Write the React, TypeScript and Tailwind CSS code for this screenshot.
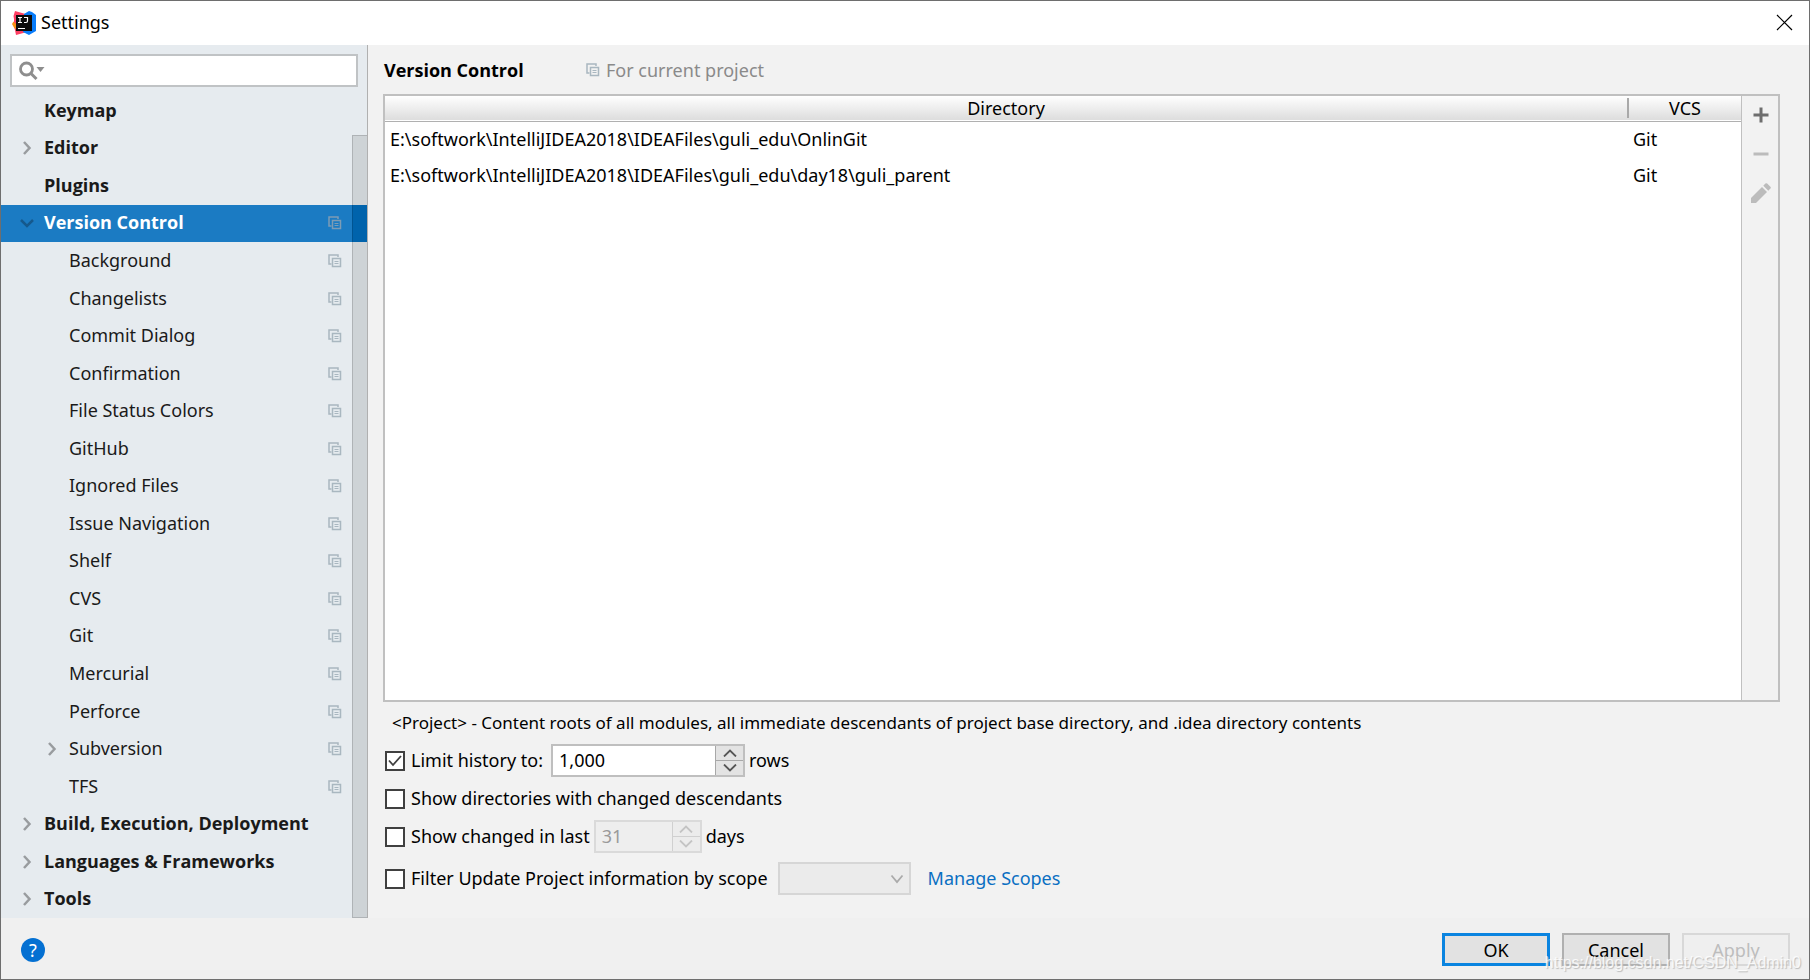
import { useState } from "react"

type Row = {
    label: string
    level: number
    arrow?: "right" | "down"
    project?: boolean
}

const rows: Row[] = [
    { label: "Keymap", level: 0 },
    { label: "Editor", level: 0, arrow: "right" },
    { label: "Plugins", level: 0 },
    { label: "Version Control", level: 0, arrow: "down", project: true },
    { label: "Background", level: 1, project: true },
    { label: "Changelists", level: 1, project: true },
    { label: "Commit Dialog", level: 1, project: true },
    { label: "Confirmation", level: 1, project: true },
    { label: "File Status Colors", level: 1, project: true },
    { label: "GitHub", level: 1, project: true },
    { label: "Ignored Files", level: 1, project: true },
    { label: "Issue Navigation", level: 1, project: true },
    { label: "Shelf", level: 1, project: true },
    { label: "CVS", level: 1, project: true },
    { label: "Git", level: 1, project: true },
    { label: "Mercurial", level: 1, project: true },
    { label: "Perforce", level: 1, project: true },
    { label: "Subversion", level: 1, arrow: "right", project: true },
    { label: "TFS", level: 1, project: true },
    { label: "Build, Execution, Deployment", level: 0, arrow: "right" },
    { label: "Languages & Frameworks", level: 0, arrow: "right" },
    { label: "Tools", level: 0, arrow: "right" },
]

const directories = [
    { path: "E:\\softwork\\IntelliJIDEA2018\\IDEAFiles\\guli_edu\\OnlinGit", vcs: "Git" },
    { path: "E:\\softwork\\IntelliJIDEA2018\\IDEAFiles\\guli_edu\\day18\\guli_parent", vcs: "Git" },
]

function Logo() {
    return (
        <svg width="24" height="24" viewBox="0 0 24 24" aria-hidden="true">
            <path d="M3 0 10 2l7 2-2 17-11 3-1-5-1-3 0-8-.5-3z" fill="#fe3f63" />
            <path d="M0 13 1.500 10.500l3 3v5L2 16.500z" fill="#f99012" />
            <path d="M12 3 17 0l3 1 4 3v16l-7 4-6-3z" fill="#087cfa" />
            <rect x="4" y="4" width="16" height="16" fill="#0c0c0c" />
            <path d="M6 6.500h4M8 6.500v5M6 11.500h4M12 6.500h3.500v3.500q0 1.500-1.500 1.500h-2M6 17.500h7" stroke="#fff" strokeWidth="1.200" fill="none" />
        </svg>
    )
}

function ProjectIcon({ selected = false }: { selected?: boolean }) {
    return (
        <svg width="14" height="14" viewBox="0 0 14 14" fill="none" stroke={selected ? "#7d9cb5" : "#a9b7c0"} className="shrink-0" aria-hidden="true">
            <path d="M3.500 10H1V1h9v2" strokeWidth="1.500" />
            <path d="M4.500 4.500h8v8h-8z" strokeWidth="1.500" />
            <path d="M6.500 7.500h4M6.500 9.500h4" />
        </svg>
    )
}

function Arrow({ dir }: { dir: "right" | "down" }) {
    return (
        <svg width="14" height="16" viewBox="0 0 14 16" fill="none" strokeWidth="2.500" aria-hidden="true">
            {dir === "right" ?
                <path d="M4 2l5.500 6L4 14" stroke="#999c9f" />
                : <path d="M1 5l6 6 6-6" stroke="#15598d" />
            }
        </svg>
    )
}

function TreeRow({ row, selected, onSelect }: { row: Row, selected: boolean, onSelect: () => void }) {
    return (
        <li className="flex flex-1">
            <button
                onClick={onSelect}
                className={`flex flex-1 items-center text-left ${row.level === 0 ? "pl-[19px] font-['Open_Sans',sans-serif] font-bold" : "pl-[44px]"} ${selected ? "bg-[#1b7bc3] text-white" : "text-[#1a1a1a]"}`}
            >
                <span className="w-6 shrink-0">{row.arrow && <Arrow dir={row.arrow} />}</span>
                <span className="flex-1 whitespace-nowrap pb-0.5">{row.label}</span>
                {row.project && <ProjectIcon selected={selected} />}
                <span className={`ml-[10px] w-[15px] self-stretch ${selected ? "bg-[#006fc0]" : ""}`}></span>
            </button>
        </li>
    )
}

function Check({ id, label, checked, onChange }: { id: string, label: string, checked: boolean, onChange: () => void }) {
    return (
        <div className="flex items-center gap-[6px]">
            <span className="grid">
                <input
                    id={id}
                    type="checkbox"
                    checked={checked}
                    onChange={onChange}
                    className="col-start-1 row-start-1 size-5 appearance-none border-2 border-[#404040] bg-white"
                />
                {checked && (
                    <svg width="20" height="20" viewBox="0 0 20 20" className="pointer-events-none col-start-1 row-start-1" aria-hidden="true">
                        <path d="M4 9.500l4 4.500 8-9" fill="none" stroke="#404040" strokeWidth="1.800" />
                    </svg>
                )}
            </span>
            <label htmlFor={id} className="whitespace-nowrap pb-0.5">{label}</label>
        </div>
    )
}

function Spinner({ label, value, onChange, wide = false, disabled = false }: { label: string, value: string, onChange: (v: string) => void, wide?: boolean, disabled?: boolean }) {
    const step = (n: number) => onChange((Number(value.replace(/,/g, "")) + n).toLocaleString("en-US"))
    return (
        <div className={`flex h-[33px] border-2 ${disabled ? "border-[#dadada] text-[#9a9a9a]" : "border-[#bfbfbf]"}`}>
            <input
                type="text"
                aria-label={label}
                value={value}
                disabled={disabled}
                onChange={(e) => onChange(e.target.value)}
                className={`px-[6px] pb-0.5 ${wide ? "w-[162px]" : "w-[76px]"} ${disabled ? "bg-[#eeeeee]" : "bg-white"}`}
            />
            <div className={`flex w-7 flex-col divide-y border-l ${disabled ? "divide-[#d0d0d0] border-[#d0d0d0] bg-[#ececec]" : "divide-[#a8a8a8] border-[#a8a8a8] bg-[#e3e3e3]"}`}>
                <button aria-label="Increase" disabled={disabled} onClick={() => step(1)} className="flex flex-1 items-center justify-center">
                    <svg width="14" height="8" viewBox="0 0 14 8" fill="none" stroke={disabled ? "#c4c4c4" : "#555"} strokeWidth="1.800"><path d="M1 7.500l6-6 6 6" /></svg>
                </button>
                <button aria-label="Decrease" disabled={disabled} onClick={() => step(-1)} className="flex flex-1 items-center justify-center">
                    <svg width="14" height="8" viewBox="0 0 14 8" fill="none" stroke={disabled ? "#c4c4c4" : "#555"} strokeWidth="1.800"><path d="M1 .5l6 6 6-6" /></svg>
                </button>
            </div>
        </div>
    )
}

export default function App() {
    const [selected, setSelected] = useState("Version Control")
    const [limit, setLimit] = useState(true)
    const [descendants, setDescendants] = useState(false)
    const [changed, setChanged] = useState(false)
    const [filter, setFilter] = useState(false)
    const [historyRows, setHistoryRows] = useState("1,000")
    const [days, setDays] = useState("31")

    return (
        <div className="relative flex min-h-screen flex-col border border-[#6e6e6e] bg-[#f2f2f2] font-['Noto_Sans',sans-serif] text-[18px] leading-6 text-black">
            <header className="flex h-11 items-center bg-white pb-px pl-[11px] pr-4">
                <Logo />
                <h1 className="ml-[5px] flex-1 pb-px">Settings</h1>
                <button aria-label="Close">
                    <svg width="17" height="17" viewBox="0 0 17 17" stroke="#000" strokeWidth="1.200"><path d="M1 1l15 15M16 1L1 16" /></svg>
                </button>
            </header>

            <div className="flex flex-1">
                <aside className="flex w-[367px] shrink-0 flex-col border-r border-[#b0b0b0] bg-[#e6ebef]">
                    <div className="mx-[9px] mb-[5px] mt-[9px] flex h-[33px] items-center border-2 border-[#c0c3c5] bg-white pl-[6px]">
                        <svg width="28" height="20" viewBox="0 0 28 20" aria-hidden="true">
                            <circle cx="8.500" cy="8" r="6" fill="none" stroke="#8e8e8e" strokeWidth="2.800" />
                            <path d="M12.500 12l6 6" stroke="#8e8e8e" strokeWidth="3" />
                            <path d="M18.500 6h8l-4 5z" fill="#8e8e8e" />
                        </svg>
                        <input type="text" aria-label="Search settings" className="min-w-0 flex-1 outline-none" />
                    </div>
                    <div className="relative flex flex-1">
                        <ul className="flex flex-1 flex-col">
                            {rows.map((row) => (
                                <TreeRow key={row.label} row={row} selected={row.label === selected} onSelect={() => setSelected(row.label)} />
                            ))}
                        </ul>
                        <div className="pointer-events-none absolute bottom-0 right-0 top-[43px] w-[15px] border border-r-0 border-black/15 bg-black/10"></div>
                    </div>
                </aside>

                <main className="flex min-w-0 flex-1 flex-col pl-[15px] pr-[29px]">
                    <div className="flex h-[49px] items-center pl-px">
                        <h2 className="w-[202px] font-['Open_Sans',sans-serif] font-bold">Version Control</h2>
                        <ProjectIcon />
                        <span className="ml-[6px] text-[#8a8a8a]">For current project</span>
                    </div>

                    <div className="flex flex-1 border-2 border-[#c0c0c0]">
                        <div className="flex-1 bg-white">
                            <table className="w-full table-fixed border-collapse">
                                <thead>
                                    <tr className="h-[25px] border-b border-[#b0b0b0] bg-linear-to-b from-white to-[#dddddd]">
                                        <th className="p-0 font-normal">Directory</th>
                                        <th className="w-[114px] p-0 font-normal">
                                            <div className="flex h-5 items-center border-l-2 border-[#a9a9a9]">
                                                <span className="flex-1">VCS</span>
                                            </div>
                                        </th>
                                    </tr>
                                </thead>
                                <tbody>
                                    {directories.map((d) => (
                                        <tr key={d.path} className="h-9">
                                            <td className="truncate py-0 pl-[5px]">{d.path}</td>
                                            <td className="py-0 pl-[6px]">{d.vcs}</td>
                                        </tr>
                                    ))}
                                </tbody>
                            </table>
                        </div>
                        <div className="flex w-[37px] flex-col items-center gap-[19px] border-l border-[#c0c0c0] pl-0.5 pt-[9px]">
                            <button aria-label="Add">
                                <svg width="20" height="20" viewBox="0 0 20 20" stroke="#6e6e6e" strokeWidth="3"><path d="M10 2.500v15M2.500 10h15" /></svg>
                            </button>
                            <button aria-label="Remove" disabled>
                                <svg width="20" height="20" viewBox="0 0 20 20" stroke="#bcbcbc" strokeWidth="3"><path d="M2.500 10h15" /></svg>
                            </button>
                            <button aria-label="Edit" disabled>
                                <svg width="20" height="20" viewBox="0 0 20 20" fill="#bcbcbc"><path d="M0 15 11 4l5 5L5 20H0z" /><path d="M12.300 2.700 14.400.6q.9-.9 1.800 0l3.200 3.200q.9.9 0 1.800L17.300 7.700z" /></svg>
                            </button>
                        </div>
                    </div>

                    <p className="mt-[9px] pl-[9px] text-[17px]">&lt;Project&gt; - Content roots of all modules, all immediate descendants of project base directory, and .idea directory contents</p>

                    <div className="mt-[9px] flex h-[33px] items-center pl-[2px]">
                        <Check id="limit" label="Limit history to:" checked={limit} onChange={() => setLimit(!limit)} />
                        <div className="ml-2 mr-1"><Spinner label="History rows" value={historyRows} onChange={setHistoryRows} wide /></div>
                        <span className="pb-0.5">rows</span>
                    </div>
                    <div className="mt-[5px] flex h-[33px] items-center pl-[2px]">
                        <Check id="descendants" label="Show directories with changed descendants" checked={descendants} onChange={() => setDescendants(!descendants)} />
                    </div>
                    <div className="mt-[5px] flex h-[33px] items-center pl-[2px]">
                        <Check id="changed" label="Show changed in last" checked={changed} onChange={() => setChanged(!changed)} />
                        <div className="mx-1"><Spinner label="Days" value={days} onChange={setDays} disabled={!changed} /></div>
                        <span className="pb-0.5">days</span>
                    </div>
                    <div className="mb-[23px] mt-[9px] flex h-[33px] items-center pl-[2px]">
                        <Check id="filter" label="Filter Update Project information by scope" checked={filter} onChange={() => setFilter(!filter)} />
                        <div className="ml-[10px] mr-[17px] grid h-[33px] w-[133px] items-center">
                            <select aria-label="Scope" disabled={!filter} className="col-start-1 row-start-1 h-full w-full appearance-none border-2 border-[#d6d6d6] bg-[#ebebeb]">
                                <option></option>
                            </select>
                            <svg width="14" height="10" viewBox="0 0 14 10" fill="none" stroke="#aaa" strokeWidth="1.800" className="pointer-events-none col-start-1 row-start-1 mr-[7px] justify-self-end"><path d="M1.500 1.500 7 8l5.500-6.500" /></svg>
                        </div>
                        <a href="#scopes" className="pb-0.5 text-[#0a6fc2]">Manage Scopes</a>
                    </div>
                </main>
            </div>

            <footer className="flex h-[61px] items-center gap-3 bg-[#f0f0f0] pb-1 pl-5 pr-[19px] pt-[6px]">
                <button aria-label="Help" className="size-6 rounded-full bg-[#0470d2] text-white">?</button>
                <div className="flex-1"></div>
                <button className="h-[33px] w-[108px] border-3 border-[#0a84e0] bg-[#e2e2e2]">OK</button>
                <button className="h-[33px] w-[108px] border-2 border-[#b0b0b0] bg-[#e2e2e2]">Cancel</button>
                <button disabled className="h-[33px] w-[108px] border-2 border-[#d8d8d8] bg-[#efefef] text-[#bdbdbd]">Apply</button>
            </footer>

            <div className="pointer-events-none absolute bottom-1 right-2 font-['Liberation_Sans',sans-serif] text-base text-white/80 [text-shadow:1px_1px_1px_#bbb]">https://blog.csdn.net/CSDN_Admin0</div>
        </div>
    )
}
